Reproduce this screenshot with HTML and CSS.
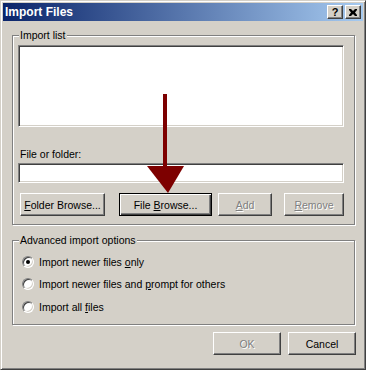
FILE: index.html
```html
<!DOCTYPE html>
<html lang="en">
<head>
    <meta charset="UTF-8">
    <title>Import Files</title>
    <link rel="stylesheet" href="styles.css">
</head>
<body>

<div class="window">
    <div class="titlebar">
        <span class="title">Import Files</span>
        <span class="caption-btn help">?</span>
        <span class="caption-btn close">
            <svg width="8" height="7" viewBox="0 0 8 7">
                <path d="M0 0h2l2 2 2-2h2v1L6 3.5 8 6v1H6L4 5 2 7H0V6l2-2.5L0 1z" fill="#000"/>
            </svg>
        </span>
    </div>

    <div class="content">
        <!-- Import list group -->
        <div class="group list-group">
            <span class="group-title">Import list</span>
            <div class="listbox"></div>
            <label class="field-label">File or folder:</label>
            <div class="textbox"></div>
            <div class="button-row">
                <button class="btn btn-folder"><u>F</u>older Browse...</button>
                <button class="btn btn-default btn-file">File <u>B</u>rowse...</button>
                <button class="btn btn-disabled btn-add"><u>A</u>dd</button>
                <button class="btn btn-disabled btn-remove"><u>R</u>emove</button>
            </div>
        </div>

        <!-- Advanced options group -->
        <div class="group options-group">
            <span class="group-title">Advanced import options</span>
            <div class="radio-row first">
                <span class="radio checked"></span>
                <span>Import newer files <u>o</u>nly</span>
            </div>
            <div class="radio-row">
                <span class="radio"></span>
                <span>Import newer files and <u>p</u>rompt for others</span>
            </div>
            <div class="radio-row last">
                <span class="radio"></span>
                <span>Import all <u>f</u>iles</span>
            </div>
        </div>

        <div class="footer">
            <button class="btn btn-disabled btn-dialog">OK</button>
            <button class="btn btn-dialog">Cancel</button>
        </div>
    </div>

    <!-- annotation arrow drawn over the dialog -->
    <svg class="arrow" width="366" height="370" viewBox="0 0 366 370">
        <rect x="163" y="94" width="4" height="76" fill="#7d0000"/>
        <path d="M147 166 L184 166 L168 193 Z" fill="#7d0000"/>
    </svg>
</div>

</body>
</html>
```

FILE: styles.css
```css
body {
    margin: 0;
    background-color: #d4d0c8;
    font-family: 'Liberation Sans', Arial, sans-serif;
    font-size: 10.5px;
    color: #000;
}
.window {
    position: relative;
    width: 366px;
    height: 370px;
    box-sizing: border-box;
    padding: 2px;
    background-color: #d4d0c8;
    border: 1px solid;
    border-color: #d4d0c8 #404040 #404040 #d4d0c8;
    box-shadow: inset 1px 1px #fff, inset -1px -1px #808080;
}
.titlebar {
    height: 18px;
    display: flex;
    align-items: center;
    padding: 0 2px;
    background: linear-gradient(to right, #0a246a, #a6caf0);
}
.title {
    flex: 1;
    color: #fff;
    font-weight: bold;
    font-size: 12px;
}
.caption-btn {
    width: 16px;
    height: 14px;
    box-sizing: border-box;
    display: flex;
    align-items: center;
    justify-content: center;
    background-color: #d4d0c8;
    border: 1px solid;
    border-color: #fff #404040 #404040 #fff;
    box-shadow: inset -1px -1px #808080;
    font-weight: bold;
    font-size: 11px;
    line-height: 12px;
}
.close {
    margin-left: 2px;
}
.content {
    padding: 14px 8px 0 9px;
}
.group {
    border: 1px solid #808080;
    box-shadow: inset 1px 1px #fff, 1px 1px #fff;
    padding-bottom: 8px;
}
.group-title {
    display: table;
    margin: -7px 0 0 6px;
    padding: 0 1px;
    line-height: 13px;
    background-color: #d4d0c8;
}
.listbox, .textbox {
    box-sizing: border-box;
    background-color: #fff;
    border: 1px solid;
    border-color: #808080 #fff #fff #808080;
    box-shadow: inset 1px 1px #404040, inset -1px -1px #d4d0c8;
}
.listbox {
    height: 82px;
    margin: 3px 10px 0 5px;
}
.field-label {
    display: block;
    margin: 21px 0 0 7px;
    line-height: 13px;
}
.textbox {
    height: 20px;
    margin: 2px 10px 0 5px;
}
.button-row {
    display: flex;
    margin: 10px 0 0 7px;
}
.btn {
    height: 23px;
    box-sizing: border-box;
    padding: 0;
    font-family: inherit;
    font-size: 10.5px;
    color: #000;
    background-color: #d4d0c8;
    border: 1px solid;
    border-color: #fff #404040 #404040 #fff;
    box-shadow: inset -1px -1px #808080;
    border-radius: 0;
}
.btn-default {
    border-color: #000;
    box-shadow: inset 1px 1px #fff, inset -1px -1px #404040, inset -2px -2px #808080;
}
.btn-disabled {
    color: #808080;
    text-shadow: 1px 1px #fff;
}
.btn-folder {
    width: 85px;
}
.btn-file {
    width: 93px;
    margin-left: 14px;
}
.btn-add {
    width: 54px;
    margin-left: 6px;
}
.btn-remove {
    width: 60px;
    margin-left: 12px;
}
.options-group {
    margin-top: 15px;
    padding-bottom: 6px;
}
.radio-row {
    display: flex;
    align-items: center;
    height: 22px;
    margin-left: 9px;
}
.radio-row.first {
    margin-top: 4px;
}
.radio-row.last {
    height: 23px;
}
.radio {
    position: relative;
    width: 12px;
    height: 12px;
    box-sizing: border-box;
    margin-right: 5px;
    border-radius: 50%;
    background-color: #fff;
    border: 1px solid;
    border-color: #808080 #fff #fff #808080;
    box-shadow: inset 1px 1px #404040, inset -1px -1px #d4d0c8;
}
.radio.checked::after {
    content: '';
    position: absolute;
    left: 3px;
    top: 3px;
    width: 4px;
    height: 4px;
    border-radius: 50%;
    background-color: #000;
}
.footer {
    display: flex;
    justify-content: flex-end;
    gap: 7px;
    margin-top: 7px;
    margin-right: -1px;
}
.btn-dialog {
    width: 68px;
}
.arrow {
    position: absolute;
    left: -1px;
    top: -1px;
    pointer-events: none;
}
```
